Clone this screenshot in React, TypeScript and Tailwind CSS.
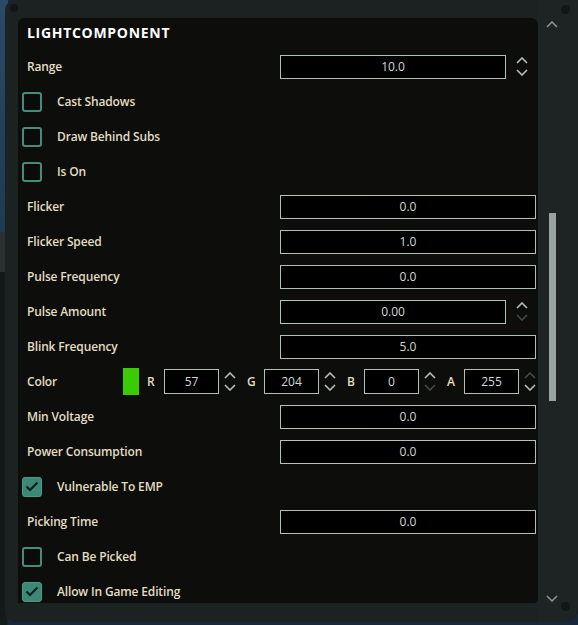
import React from "react";

const font = { fontFamily: '"Open Sans", "Noto Sans", sans-serif' };

function Chev({ dir, dim }: { dir: "up" | "down"; dim?: boolean }) {
  return (
    <svg width="12" height="7" viewBox="0 0 12 7">
      <path
        d={dir === "up" ? "M1 6 L6 1 L11 6" : "M1 1 L6 6 L11 1"}
        fill="none"
        stroke={dim ? "#454b48" : "#b7bfbb"}
        strokeWidth="1.6"
      />
    </svg>
  );
}

function Arrows({ upDim, downDim, w }: { upDim?: boolean; downDim?: boolean; w: string }) {
  return (
    <div className={`flex flex-col items-center justify-center gap-[5px] ${w}`}>
      <Chev dir="up" dim={upDim} />
      <Chev dir="down" dim={downDim} />
    </div>
  );
}

function Input({ value, cls }: { value: string; cls: string }) {
  return (
    <div
      className={`h-[24px] border border-[#b1c0b7] bg-black flex items-center justify-center text-[12px] text-[#d3d8d4] ${cls}`}
    >
      {value}
    </div>
  );
}

function Label({ text }: { text: string }) {
  return <div className="w-[262px] pl-[9px] text-[12px] font-semibold tracking-[-0.15px] text-[#e2ddc3] shrink-0">{text}</div>;
}

function FieldRow({ label, value }: { label: string; value: string }) {
  return (
    <div className="h-[35px] flex items-center shrink-0">
      <Label text={label} />
      <Input value={value} cls="w-[256px]" />
    </div>
  );
}

function ArrowRow({ label, value, upDim, downDim }: { label: string; value: string; upDim?: boolean; downDim?: boolean }) {
  return (
    <div className="h-[35px] flex items-center shrink-0">
      <Label text={label} />
      <Input value={value} cls="w-[226px]" />
      <Arrows upDim={upDim} downDim={downDim} w="w-[32px]" />
    </div>
  );
}

function CheckRow({ label, checked }: { label: string; checked?: boolean }) {
  return (
    <div className="h-[35px] flex items-center shrink-0 pl-[4px]">
      {checked ? (
        <div className="w-[20px] h-[20px] rounded-[3px] bg-[#3c8877] border border-[#4e9a88] flex items-center justify-center">
          <svg width="14" height="11" viewBox="0 0 14 11">
            <path d="M1.5 5.5 L5 9 L12.5 1.5" fill="none" stroke="#0d1f1a" strokeWidth="2.2" />
          </svg>
        </div>
      ) : (
        <div className="w-[20px] h-[20px] rounded-[3px] border-2 border-[#4a8a7a] bg-[#0a0c0b]" />
      )}
      <div className="ml-[15px] text-[12px] font-semibold tracking-[-0.15px] text-[#e2ddc3]">{label}</div>
    </div>
  );
}

function ColorGroup({ letter, value, upDim, downDim }: { letter: string; value: string; upDim?: boolean; downDim?: boolean }) {
  return (
    <div className="flex items-center w-[100px] shrink-0">
      <div className="w-[17px] text-[12px] font-semibold text-[#e2ddc3]">{letter}</div>
      <div className="h-[25px] w-[55px] border border-[#b1c0b7] bg-black flex items-center justify-center text-[12px] text-[#d3d8d4]">
        {value}
      </div>
      <Arrows upDim={upDim} downDim={downDim} w="w-[22px]" />
    </div>
  );
}

function ColorRow() {
  return (
    <div className="h-[35px] flex items-center shrink-0">
      <div className="w-[105px] pl-[9px] text-[12px] font-semibold tracking-[-0.15px] text-[#e2ddc3] shrink-0">Color</div>
      <div className="w-[16px] h-[27px] bg-[#39cc00] shrink-0" />
      <div className="w-[8px] shrink-0" />
      <ColorGroup letter="R" value="57" />
      <ColorGroup letter="G" value="204" />
      <ColorGroup letter="B" value="0" downDim />
      <ColorGroup letter="A" value="255" upDim />
    </div>
  );
}

export default function App() {
  return (
    <div className="w-[578px] h-[625px] relative overflow-hidden bg-[#16283a]" style={font}>
      {/* left background strip */}
      <div className="absolute left-0 top-0 w-[8px] h-[625px] bg-gradient-to-b from-[#2a4a66] via-[#1c3348] to-[#14212c]" />
      <div className="absolute left-0 top-[232px] w-[9px] h-[40px] rounded-r-[6px] bg-[#2a302f]" />
      <div className="absolute left-0 top-[272px] w-[7px] h-[353px] bg-[#141a1a]" />
      {/* frame */}
      <div className="absolute left-[5px] top-0 right-0 bottom-[3px] rounded-tl-[10px] rounded-bl-[10px] rounded-br-[12px] bg-[#1c2221] flex">
        <div className="w-[13px] shrink-0" />
        <div className="mt-[18px] mb-[19px] w-[520px] rounded-tr-[7px] rounded-br-[4px] rounded-tl-[6px] bg-[#0d0d0c] overflow-hidden flex flex-col">
          <div className="h-[28px] pl-[9px] flex items-center text-[14px] font-bold text-white tracking-[0.7px] shrink-0">
            LIGHTCOMPONENT
          </div>
          <div className="h-[3px] shrink-0" />
          <ArrowRow label="Range" value="10.0" />
          <CheckRow label="Cast Shadows" />
          <CheckRow label="Draw Behind Subs" />
          <CheckRow label="Is On" />
          <FieldRow label="Flicker" value="0.0" />
          <FieldRow label="Flicker Speed" value="1.0" />
          <FieldRow label="Pulse Frequency" value="0.0" />
          <ArrowRow label="Pulse Amount" value="0.00" downDim />
          <FieldRow label="Blink Frequency" value="5.0" />
          <ColorRow />
          <FieldRow label="Min Voltage" value="0.0" />
          <FieldRow label="Power Consumption" value="0.0" />
          <CheckRow label="Vulnerable To EMP" checked />
          <FieldRow label="Picking Time" value="0.0" />
          <CheckRow label="Can Be Picked" />
          <CheckRow label="Allow In Game Editing" checked />
        </div>
        {/* scrollbar column */}
        <div className="flex-1 flex flex-col items-center pt-[21px] pb-[20px] pr-[12px] bg-[#1e2423] rounded-br-[12px]">
          <svg width="12" height="7" viewBox="0 0 12 7">
            <path d="M1 6 L6 1 L11 6" fill="none" stroke="#8d9692" strokeWidth="1.5" />
          </svg>
          <div className="flex-1 w-[7px] mt-[5px] flex flex-col">
            <div className="h-[180px] shrink-0" />
            <div className="h-[188px] w-[7px] bg-[#98a29e] shrink-0" />
          </div>
          <svg width="12" height="7" viewBox="0 0 12 7">
            <path d="M1 1 L6 6 L11 1" fill="none" stroke="#8d9692" strokeWidth="1.5" />
          </svg>
        </div>
      </div>
      {/* decorative screws */}
      <div className="absolute left-[10px] top-[4px] w-[8px] h-[8px] rounded-full bg-[#121616]" />
      <div className="absolute right-[8px] top-[5px] w-[9px] h-[9px] rounded-full bg-[#121616]" />
      <div className="absolute right-[8px] bottom-[14px] w-[9px] h-[9px] rounded-full bg-[#121616]" />
    </div>
  );
}
